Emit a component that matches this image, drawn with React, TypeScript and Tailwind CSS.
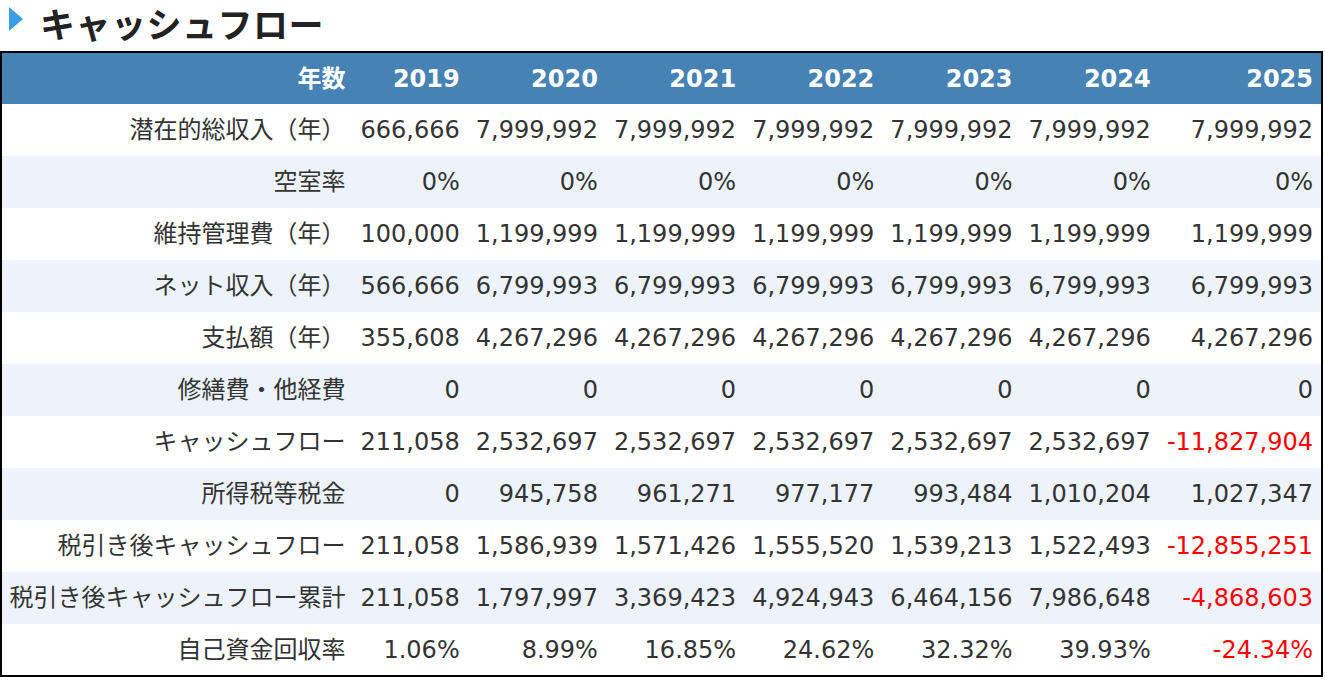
const years = ["2019", "2020", "2021", "2022", "2023", "2024", "2025"];

const rows: { label: string; values: string[] }[] = [
  { label: "潜在的総収入（年）", values: ["666,666", "7,999,992", "7,999,992", "7,999,992", "7,999,992", "7,999,992", "7,999,992"] },
  { label: "空室率", values: ["0%", "0%", "0%", "0%", "0%", "0%", "0%"] },
  { label: "維持管理費（年）", values: ["100,000", "1,199,999", "1,199,999", "1,199,999", "1,199,999", "1,199,999", "1,199,999"] },
  { label: "ネット収入（年）", values: ["566,666", "6,799,993", "6,799,993", "6,799,993", "6,799,993", "6,799,993", "6,799,993"] },
  { label: "支払額（年）", values: ["355,608", "4,267,296", "4,267,296", "4,267,296", "4,267,296", "4,267,296", "4,267,296"] },
  { label: "修繕費・他経費", values: ["0", "0", "0", "0", "0", "0", "0"] },
  { label: "キャッシュフロー", values: ["211,058", "2,532,697", "2,532,697", "2,532,697", "2,532,697", "2,532,697", "-11,827,904"] },
  { label: "所得税等税金", values: ["0", "945,758", "961,271", "977,177", "993,484", "1,010,204", "1,027,347"] },
  { label: "税引き後キャッシュフロー", values: ["211,058", "1,586,939", "1,571,426", "1,555,520", "1,539,213", "1,522,493", "-12,855,251"] },
  { label: "税引き後キャッシュフロー累計", values: ["211,058", "1,797,997", "3,369,423", "4,924,943", "6,464,156", "7,986,648", "-4,868,603"] },
  { label: "自己資金回収率", values: ["1.06%", "8.99%", "16.85%", "24.62%", "32.32%", "39.93%", "-24.34%"] },
];

const colWidths = ["w-[354px]", "w-[114px]", "w-[138px]", "w-[138px]", "w-[138px]", "w-[138px]", "w-[138px]", "w-[161px]"];

export default function App() {
  return (
    <div className="bg-white w-[1325px] h-[681px] overflow-hidden text-[#333] font-['DejaVu_Sans','Noto_Sans_CJK_JP',sans-serif]">
      {/* Title */}
      <div className="flex items-start h-[51px] pl-[9px] pt-[1px]">
        <span className="w-0 h-0 mt-[6px] border-y-[12px] border-y-transparent border-l-[14px] border-l-[#3a9ee6]" />
        <h2 className="ml-[17px] text-[35px] font-bold leading-[44px] tracking-[0.5px] font-['Noto_Sans_CJK_JP',sans-serif] text-[#222]">
          キャッシュフロー
        </h2>
      </div>

      <table className="table-fixed border-collapse border-2 border-black w-[1323px] text-[24px]">
        <colgroup>
          {colWidths.map((w, i) => (
            <col key={i} className={w} />
          ))}
        </colgroup>
        <thead>
          <tr className="bg-[#4682b4] text-white h-[52px]">
            <th className="text-right pr-[10px] font-bold">年数</th>
            {years.map((y) => (
              <th key={y} className="text-right pr-[10px] last:pr-[8px] font-bold">
                {y}
              </th>
            ))}
          </tr>
        </thead>
        <tbody>
          {rows.map((r, i) => (
            <tr key={r.label} className={`h-[52px] ${i % 2 === 1 ? "bg-[#eef3fb]" : "bg-white"}`}>
              <td className="text-right pr-[10px] whitespace-nowrap">{r.label}</td>
              {r.values.map((v, j) => (
                <td
                  key={j}
                  className={`text-right pr-[10px] last:pr-[8px] whitespace-nowrap ${v.startsWith("-") ? "text-[#ff0000]" : ""}`}
                >
                  {v}
                </td>
              ))}
            </tr>
          ))}
        </tbody>
      </table>
    </div>
  );
}
